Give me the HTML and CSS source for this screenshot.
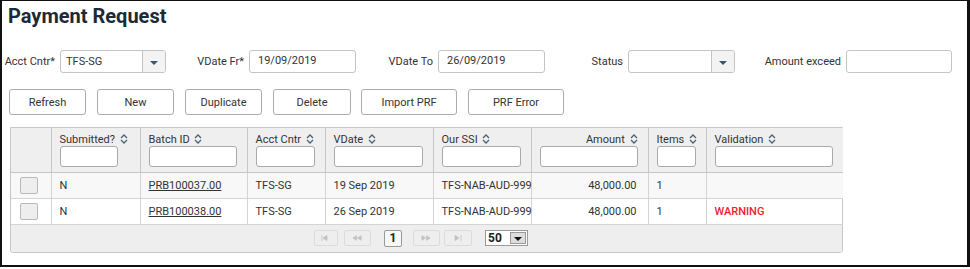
FILE: index.html
```html
<!DOCTYPE html>
<html>
<head>
    <title>Payment Request</title>
    <link rel="stylesheet" href="styles.css">
</head>
<body>
    <div class="frame">
        <h2 class="heading">Payment Request</h2>

        <div class="filters">
            <label class="flabel">Acct Cntr*</label>
            <div class="select">
                <span class="select-val">TFS-SG</span>
                <span class="select-btn"><span class="caret"></span></span>
            </div>
            <label class="flabel">VDate Fr*</label>
            <input class="field" type="text" value="19/09/2019">
            <label class="flabel">VDate To</label>
            <input class="field" type="text" value="26/09/2019">
            <label class="flabel">Status</label>
            <div class="select">
                <span class="select-val"></span>
                <span class="select-btn"><span class="caret"></span></span>
            </div>
            <label class="flabel">Amount exceed</label>
            <input class="field" type="text" value="">
        </div>

        <div class="actions">
            <button class="btn">Refresh</button>
            <button class="btn">New</button>
            <button class="btn">Duplicate</button>
            <button class="btn btn-d">Delete</button>
            <button class="btn btn-w">Import PRF</button>
            <button class="btn btn-w">PRF Error</button>
        </div>

        <div class="grid">
            <table>
                <colgroup>
                    <col style="width:40px">
                    <col style="width:89px">
                    <col style="width:107px">
                    <col style="width:78px">
                    <col style="width:108px">
                    <col style="width:98px">
                    <col style="width:117px">
                    <col style="width:58px">
                    <col style="width:137px">
                </colgroup>
                <thead>
                    <tr>
                        <th></th>
                        <th><div class="th-title">Submitted? <svg class="sort" viewBox="0 0 8 10"><path d="M1 4 L4 1 L7 4 M1 6 L4 9 L7 6"/></svg></div><input class="hfilter hfilter-s" type="text"></th>
                        <th><div class="th-title">Batch ID <svg class="sort" viewBox="0 0 8 10"><path d="M1 4 L4 1 L7 4 M1 6 L4 9 L7 6"/></svg></div><input class="hfilter" type="text"></th>
                        <th><div class="th-title">Acct Cntr <svg class="sort" viewBox="0 0 8 10"><path d="M1 4 L4 1 L7 4 M1 6 L4 9 L7 6"/></svg></div><input class="hfilter" type="text"></th>
                        <th><div class="th-title">VDate <svg class="sort" viewBox="0 0 8 10"><path d="M1 4 L4 1 L7 4 M1 6 L4 9 L7 6"/></svg></div><input class="hfilter" type="text"></th>
                        <th><div class="th-title">Our SSI <svg class="sort" viewBox="0 0 8 10"><path d="M1 4 L4 1 L7 4 M1 6 L4 9 L7 6"/></svg></div><input class="hfilter" type="text"></th>
                        <th class="num"><div class="th-title">Amount <svg class="sort" viewBox="0 0 8 10"><path d="M1 4 L4 1 L7 4 M1 6 L4 9 L7 6"/></svg></div><input class="hfilter" type="text"></th>
                        <th><div class="th-title">Items <svg class="sort" viewBox="0 0 8 10"><path d="M1 4 L4 1 L7 4 M1 6 L4 9 L7 6"/></svg></div><input class="hfilter" type="text"></th>
                        <th><div class="th-title">Validation <svg class="sort" viewBox="0 0 8 10"><path d="M1 4 L4 1 L7 4 M1 6 L4 9 L7 6"/></svg></div><input class="hfilter" type="text"></th>
                    </tr>
                </thead>
                <tbody>
                    <tr class="odd">
                        <td class="chk"><span class="box"></span></td>
                        <td>N</td>
                        <td><a class="link" href="#">PRB100037.00</a></td>
                        <td>TFS-SG</td>
                        <td>19 Sep 2019</td>
                        <td class="nowrap">TFS-NAB-AUD-999</td>
                        <td class="num">48,000.00</td>
                        <td>1</td>
                        <td></td>
                    </tr>
                    <tr>
                        <td class="chk"><span class="box"></span></td>
                        <td>N</td>
                        <td><a class="link" href="#">PRB100038.00</a></td>
                        <td>TFS-SG</td>
                        <td>26 Sep 2019</td>
                        <td class="nowrap">TFS-NAB-AUD-999</td>
                        <td class="num">48,000.00</td>
                        <td>1</td>
                        <td class="warn">WARNING</td>
                    </tr>
                </tbody>
            </table>
            <div class="pager">
                <span class="pbtn"><svg viewBox="0 0 10 6"><path d="M1 0 V6 M2 3 L6 0.5 V5.5 Z"/></svg></span>
                <span class="pbtn pbtn-w"><svg viewBox="0 0 12 6"><path d="M1 3 L5 0.5 V5.5 Z M6 3 L10 0.5 V5.5 Z"/></svg></span>
                <span class="pcur">1</span>
                <span class="pbtn pbtn-w"><svg viewBox="0 0 12 6"><path d="M1 0.5 L5 3 L1 5.5 Z M6 0.5 L10 3 L6 5.5 Z"/></svg></span>
                <span class="pbtn pbtn-n"><svg viewBox="0 0 10 6"><path d="M2 0.5 L6 3 L2 5.5 Z M8 0 V6"/></svg></span>
                <span class="psize"><span class="psize-val">50</span><span class="psize-btn"><span class="pcaret"></span></span></span>
            </div>
        </div>
    </div>
</body>
</html>
```

FILE: styles.css
```css
* {
    padding: 0;
    margin: 0;
    box-sizing: border-box;
}
body {
    width: 970px;
    height: 269px;
    font-family: Roboto, "Liberation Sans", Arial, sans-serif;
    font-size: 11px;
    color: #333;
    background-color: #ffffff;
}
.frame {
    width: 970px;
    height: 267px;
    border: 2px solid #111;
    border-right-width: 3px;
    border-top-width: 1px;
    padding-top: 3px;
}
.heading {
    font-size: 20px;
    font-weight: 700;
    line-height: 24px;
    color: #1d2935;
    padding-left: 6px;
}

/* filter row */
.filters {
    display: grid;
    grid-template-columns: 58px 106px 83px 107px 82px 107px 83px 107px 111px 106px;
    align-items: center;
    margin-top: 22px;
    height: 23px;
}
.flabel {
    text-align: right;
    padding-right: 5px;
    color: #333;
}
.field {
    height: 23px;
    border: 1px solid #c4c4c4;
    border-radius: 3px;
    padding: 0 8px 2px;
    font-family: inherit;
    font-size: 11px;
    color: #333;
}
.select {
    display: flex;
    height: 23px;
    border: 1px solid #c4c4c4;
    border-radius: 3px;
    overflow: hidden;
}
.select-val {
    flex: 1;
    padding: 4px 0 0 5px;
}
.select-btn {
    width: 23px;
    border-left: 1px solid #c4c4c4;
    background: #f3f3f3;
    display: flex;
    align-items: center;
    justify-content: center;
}
.caret {
    width: 0;
    height: 0;
    border-left: 4px solid transparent;
    border-right: 4px solid transparent;
    border-top: 4px solid #3f5566;
    margin-top: 2px;
}

/* buttons */
.actions {
    display: flex;
    gap: 11px;
    margin: 16px 0 0 7px;
}
.btn {
    width: 77px;
    height: 26px;
    background: #fff;
    border: 1px solid #ababab;
    border-radius: 3px;
    font-family: inherit;
    font-size: 11px;
    color: #333;
}
.btn-d {
    width: 78px;
    margin-right: -1px;
}
.btn-w {
    width: 96px;
}

/* grid */
.grid {
    width: 833px;
    margin: 12px 0 0 8px;
    border: 1px solid #c6c6c6;
    border-radius: 0 0 3px 3px;
}
table {
    width: 100%;
    border-collapse: collapse;
    table-layout: fixed;
}
th {
    background: #efefef;
    font-weight: 400;
    text-align: left;
    vertical-align: top;
    padding: 5px 10px 4px 8px;
    height: 44px;
    border-left: 1px solid #c6c6c6;
    border-bottom: 1px solid #c6c6c6;
}
th:first-child,
td:first-child {
    border-left: none;
}
.th-title {
    height: 13px;
    line-height: 13px;
    white-space: nowrap;
}
th.num .th-title {
    text-align: right;
}
.sort {
    width: 8px;
    height: 10px;
    margin-left: 2px;
    vertical-align: -1px;
    fill: none;
    stroke: #4e6172;
    stroke-width: 1.3;
}
.hfilter {
    display: block;
    width: 100%;
    height: 21px;
    border: 1px solid #aaa;
    border-radius: 3px;
    background: #fff;
}
.hfilter-s {
    width: 58px;
}
td {
    height: 26px;
    padding: 0 11px 0 8px;
    border-left: 1px solid #d4d4d4;
    border-bottom: 1px solid #d4d4d4;
    white-space: nowrap;
}
tr.odd td {
    background: #f8f8f8;
}
td.num {
    text-align: right;
}
td.nowrap {
    overflow: visible;
}
.chk {
    padding: 0 0 0 9px;
}
.box {
    display: block;
    width: 18px;
    height: 17px;
    background: #eee;
    border: 1px solid #b9b9b9;
    border-radius: 2px;
}
.link {
    color: #333;
    text-decoration: underline;
}
.warn {
    color: #f0202c;
    font-weight: 500;
}

/* pager */
.pager {
    height: 27px;
    background: #eee;
    display: flex;
    align-items: center;
    padding-left: 303px;
    border-radius: 0 0 3px 3px;
}
.pbtn {
    width: 24px;
    height: 16px;
    border: 1px solid #dcdcdc;
    border-radius: 2px;
    display: flex;
    align-items: center;
    justify-content: center;
    margin-right: 6px;
}
.pbtn svg {
    width: 10px;
    height: 6px;
    fill: #c2c2c2;
    stroke: #c2c2c2;
    stroke-width: 0.8;
}
.pbtn-w {
    width: 27px;
    margin-right: 13px;
}
.pbtn-w svg {
    width: 11px;
}
.pbtn-n {
    margin-left: -9px;
    width: 28px;
}
.pcur {
    width: 18px;
    height: 17px;
    border: 1px solid #999;
    border-radius: 2px;
    background: #f7f7f7;
    font-weight: 700;
    font-size: 12px;
    color: #222;
    display: flex;
    align-items: center;
    justify-content: center;
    margin-right: 11px;
}
.psize {
    margin-left: 7px;
    width: 43px;
    height: 16px;
    border: 1px solid #999;
    background: #fff;
    display: flex;
    align-items: center;
}
.psize-val {
    flex: 1;
    font-weight: 700;
    font-size: 12px;
    color: #222;
    padding-left: 2px;
}
.psize-btn {
    width: 16px;
    height: 12px;
    margin-right: 1px;
    border: 1px solid #999;
    background: #ddd;
    display: flex;
    align-items: center;
    justify-content: center;
}
.pcaret {
    width: 0;
    height: 0;
    border-left: 4px solid transparent;
    border-right: 4px solid transparent;
    border-top: 4px solid #111;
    margin-top: 2px;
}
```
